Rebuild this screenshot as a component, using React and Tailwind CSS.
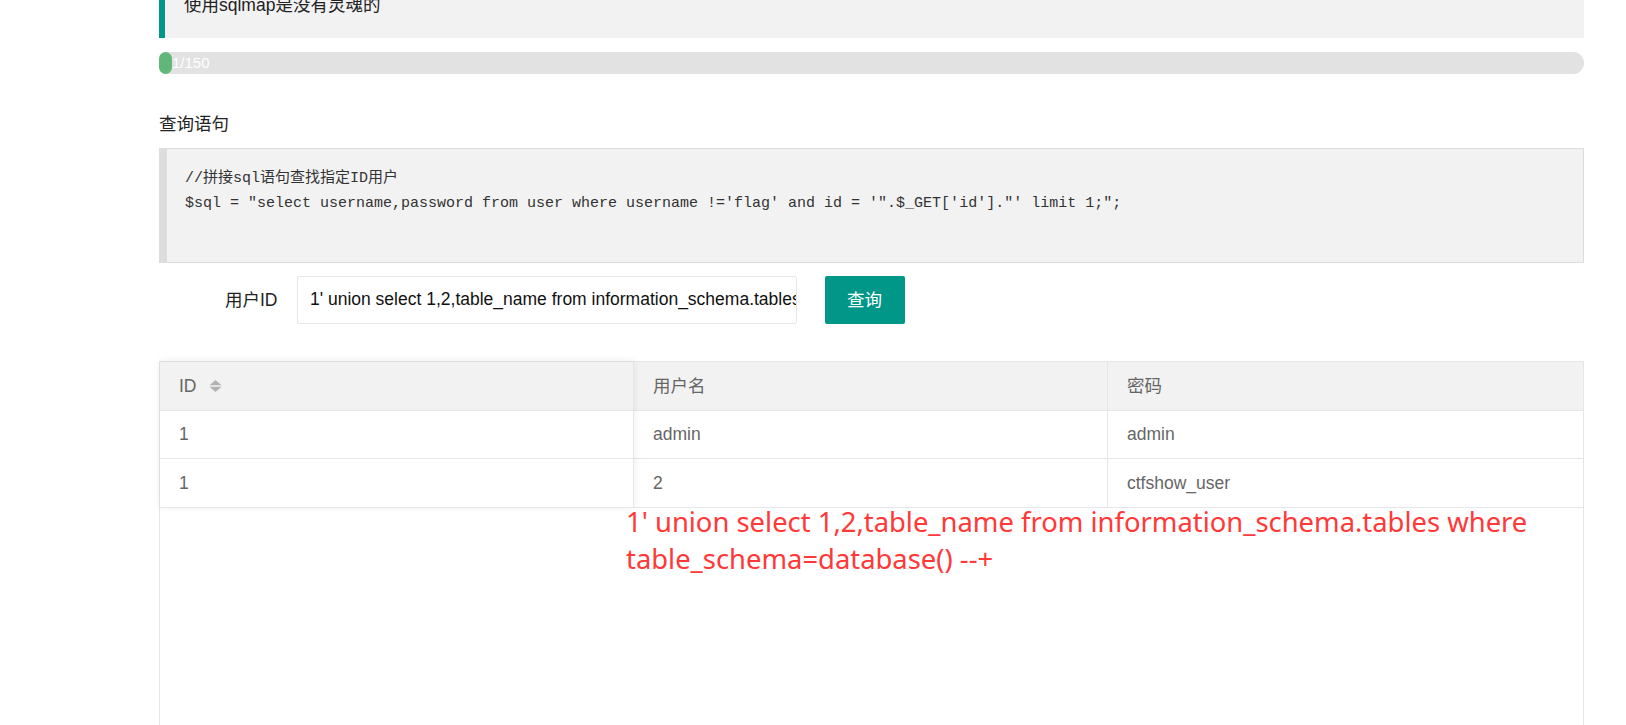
import React from "react";

function SortIcon() {
  return (
    <svg width="13" height="12" viewBox="0 0 13 12" className="ml-[12px]">
      <polygon points="6.5,0 12.5,5.2 0.5,5.2" fill="#b2b2b2" />
      <polygon points="0.5,6.8 12.5,6.8 6.5,12" fill="#b2b2b2" />
    </svg>
  );
}

function Cell({ children, header }) {
  return (
    <div
      className={
        "h-[48.5px] border-b border-[#e6e6e6] pl-[19px] flex items-center text-[17.5px] text-[#666] " +
        (header ? "bg-[#f2f2f2]" : "bg-white")
      }
    >
      {children}
    </div>
  );
}

export default function App() {
  return (
    <div className="relative h-[725px] overflow-hidden bg-white pl-[159px] pr-[42px] font-['Liberation_Sans','Noto_Sans_CJK_SC',sans-serif] text-[#333]">
      {/* blockquote */}
      <div className="mt-[-27.5px] bg-[#f2f2f2] border-l-[6px] border-[#009688] rounded-r-[2px] pl-[19px] py-[19px] text-[17.5px] leading-[27.5px] text-[#222]">
        使用sqlmap是没有灵魂的
      </div>

      {/* progress */}
      <div className="mt-[14px] h-[22px] rounded-full bg-[#e2e2e2] flex">
        <div className="w-[10px] h-full rounded-full bg-[#5fb878] whitespace-nowrap text-white text-[15px] leading-[22px] pl-[13px]">
          1/150
        </div>
      </div>

      {/* heading */}
      <div className="mt-[38px] text-[17.5px] leading-[25px] text-[#222]">查询语句</div>

      {/* code */}
      <div className="mt-[11px] bg-[#f2f2f2] border border-[#dddddd] border-l-[8px] pl-[18px] pt-[17px] pb-[21px] font-['Liberation_Mono','Noto_Sans_CJK_SC',monospace] text-[15px] leading-[25px] text-[#333] whitespace-pre">
        <div>//拼接sql语句查找指定ID用户</div>
        <div>{`$sql = "select username,password from user where username !='flag' and id = '".$_GET['id']."' limit 1;";`}</div>
        <div>&nbsp;</div>
      </div>

      {/* form */}
      <div className="mt-[13px] flex items-center">
        <div className="w-[137.5px] pr-[19px] text-right text-[17.5px] text-[#222]">用户ID</div>
        <input
          readOnly
          defaultValue="1' union select 1,2,table_name from information_schema.tables where table_schema=database() --+"
          className="w-[500px] h-[47.5px] border border-[#e6e6e6] rounded-[2px] pl-[12.5px] text-[17.5px] text-[#111] outline-none bg-white"
        />
        <button className="ml-[28px] w-[80px] h-[47.5px] bg-[#009688] text-white text-[17.5px] rounded-[2px]">
          查询
        </button>
      </div>

      {/* table */}
      <div className="mt-[37.5px] h-[420px] border border-[#e6e6e6] bg-white">
        <div className="flex">
          <div className="relative z-10 w-[474px] border-r border-[#e6e6e6] bg-white shadow-[0_-1px_8px_rgba(0,0,0,0.08)]">
            <Cell header>
              <span>ID</span>
              <SortIcon />
            </Cell>
            <Cell>1</Cell>
            <Cell>1</Cell>
          </div>
          <div className="w-[474px] border-r border-[#e6e6e6]">
            <Cell header>用户名</Cell>
            <Cell>admin</Cell>
            <Cell>2</Cell>
          </div>
          <div className="flex-1">
            <Cell header>密码</Cell>
            <Cell>admin</Cell>
            <Cell>ctfshow_user</Cell>
          </div>
        </div>
      </div>

      {/* annotation */}
      <div className="absolute left-[626px] top-[504px] whitespace-nowrap font-['Noto_Sans','Noto_Sans_CJK_SC',sans-serif] text-[27.4px] leading-[36.5px] text-[#ff3838]">
        1' union select 1,2,table_name from information_schema.tables where
        <br />
        table_schema=database() --+
      </div>
    </div>
  );
}
